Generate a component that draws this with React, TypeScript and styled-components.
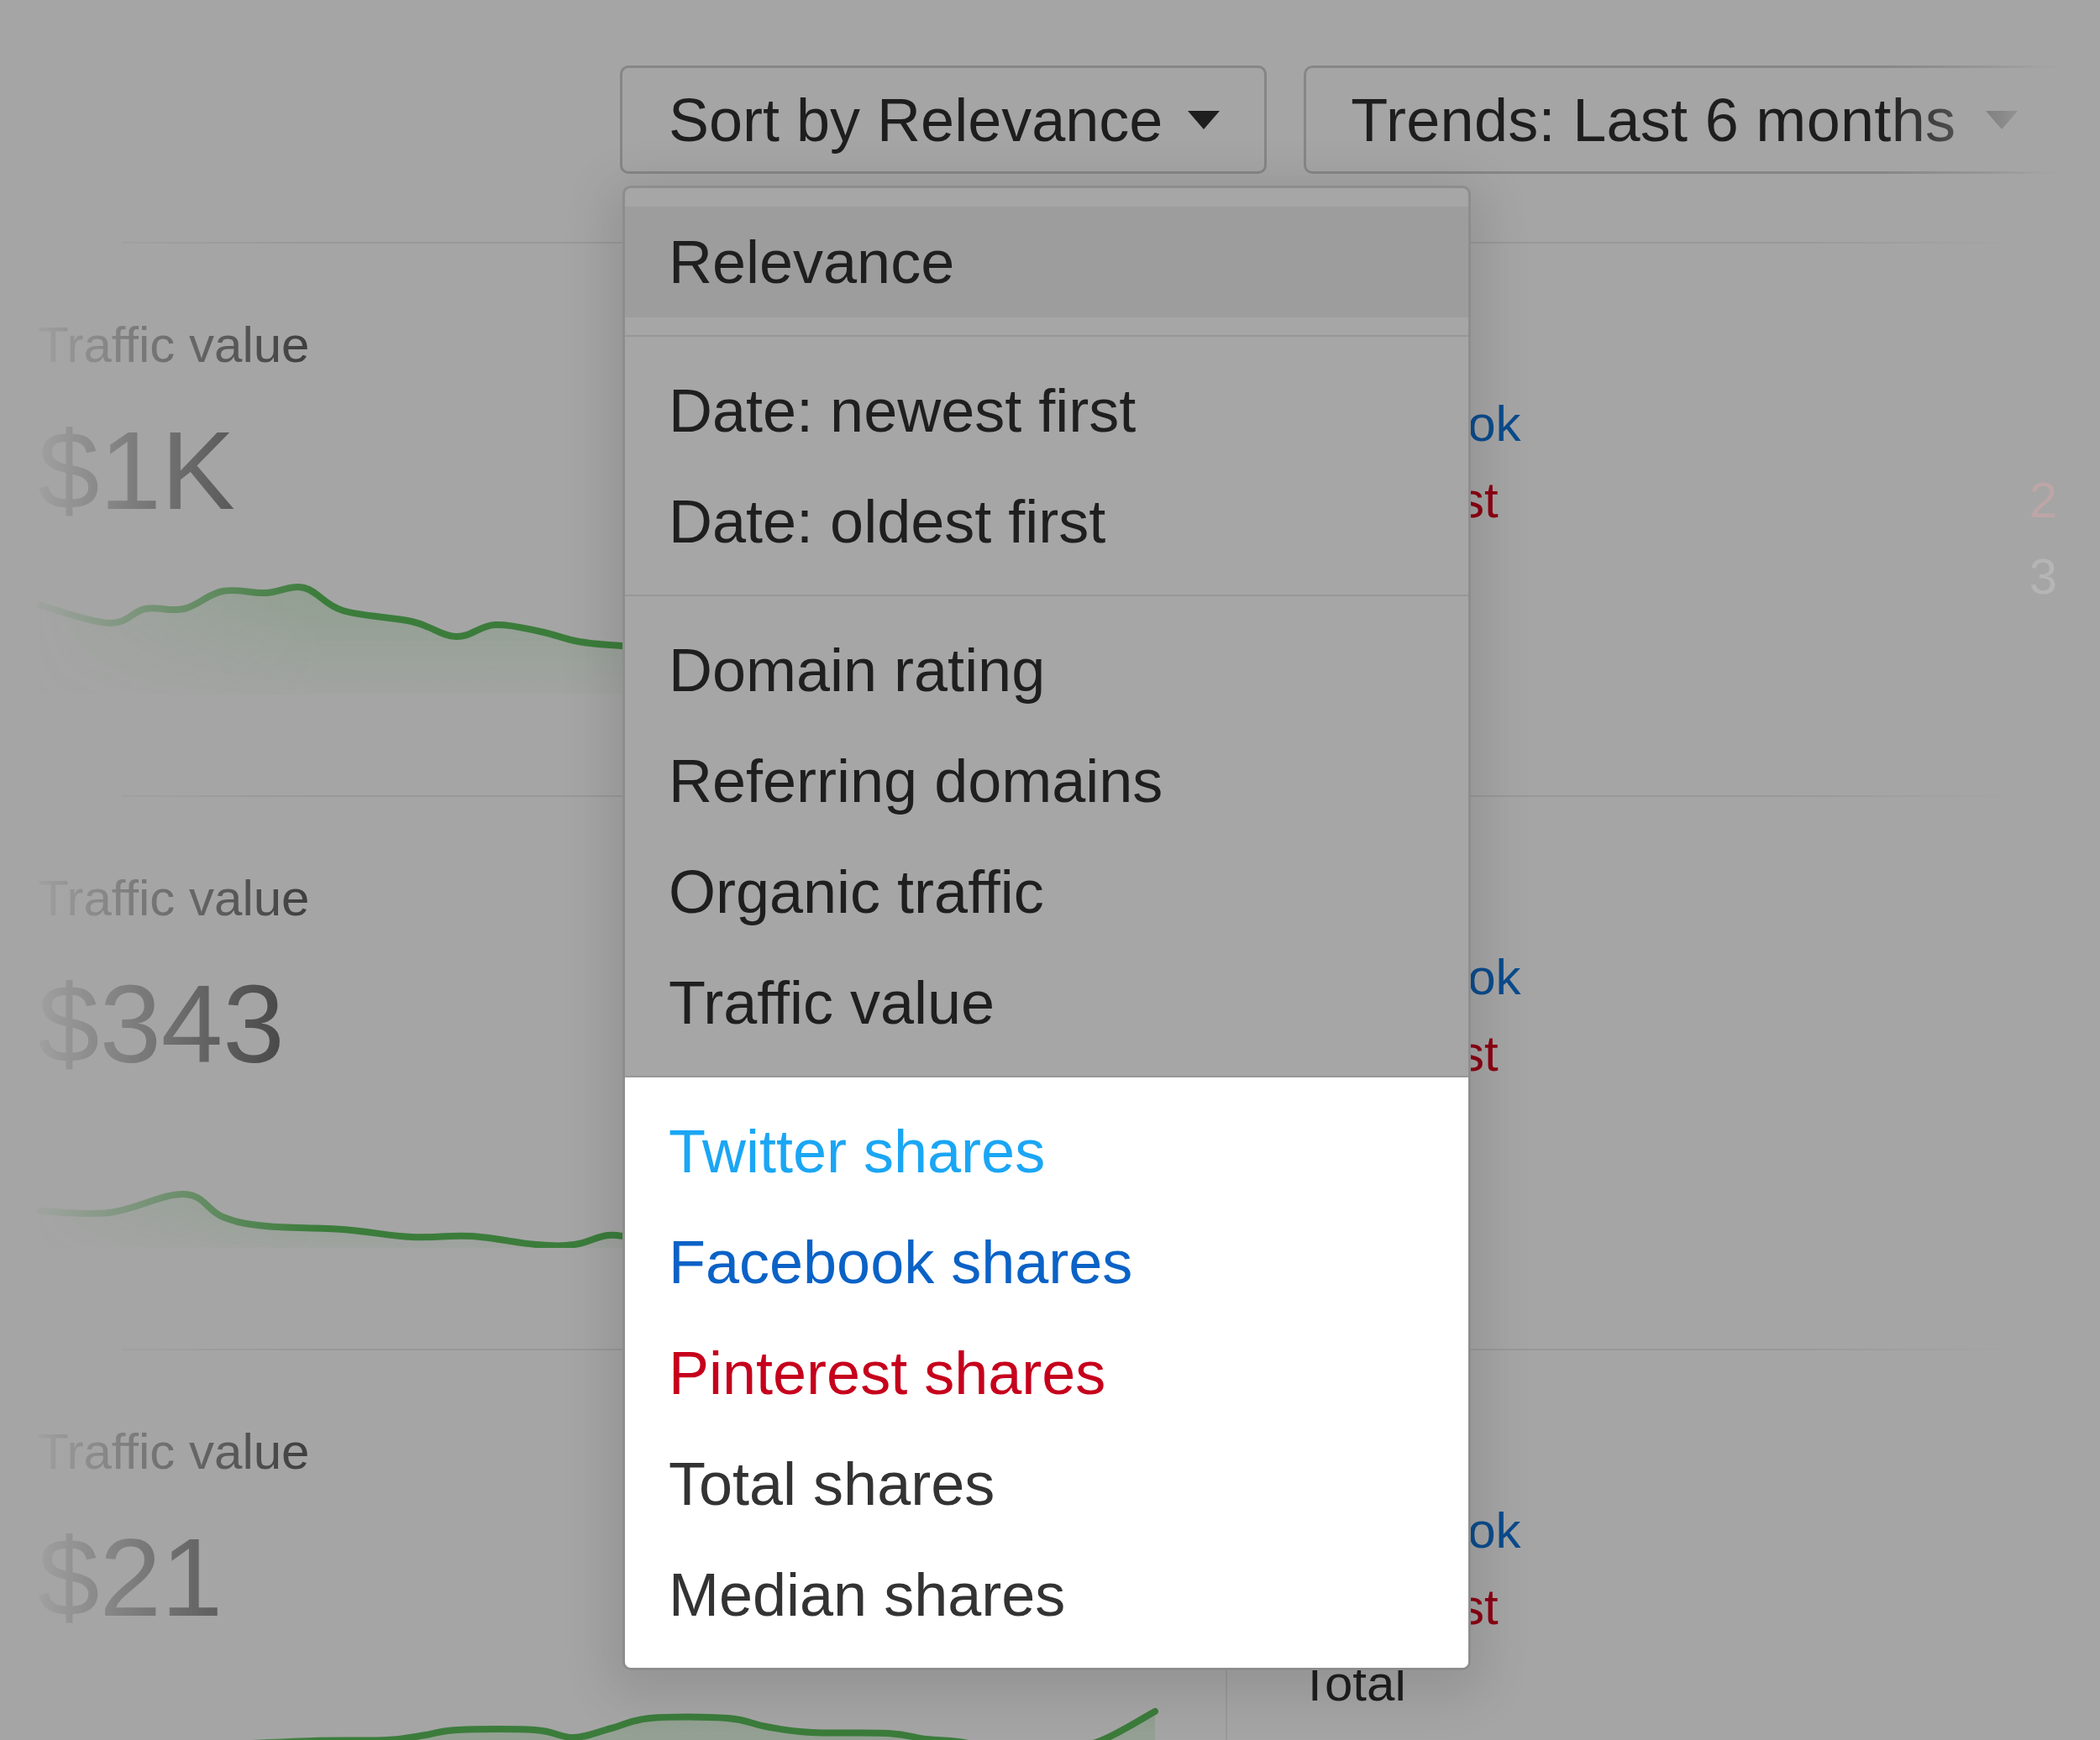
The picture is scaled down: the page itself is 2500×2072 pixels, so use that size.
import React from "react";
import styled, { createGlobalStyle } from "styled-components";

const GlobalStyle = createGlobalStyle`
  html, body {
    margin: 0;
    padding: 0;
    background: #a5a5a5;
  }
  body {
    font-family: "Liberation Sans", Arial, Helvetica, sans-serif;
    overflow: hidden;
  }
  * { box-sizing: border-box; }
`;

const Page = styled.div`
  position: relative;
  width: 2500px;
  height: 2072px;
  overflow: hidden;
  background: #a5a5a5;
`;

const Toolbar = styled.div`
  position: relative;
  z-index: 3;
  display: flex;
  gap: 44px;
  padding: 78px 0 0 738px;
`;

const SelectWrap = styled.div`
  position: relative;
`;

const SelectButton = styled.button<{ $fade?: boolean }>`
  display: flex;
  align-items: center;
  gap: ${(p) => (p.$fade ? "36px" : "30px")};
  height: 129px;
  padding: ${(p) => (p.$fade ? "0 55px 0 53px" : "0 53px 0 55px")};
  border: 3px solid #868686;
  border-radius: 10px;
  background: transparent;
  font-family: inherit;
  font-size: 72px;
  line-height: 1;
  color: #1e1e1e;
  white-space: nowrap;
  cursor: pointer;
  ${(p) =>
    p.$fade
      ? `
    letter-spacing: 0.3px;
    -webkit-mask-image: linear-gradient(to right, #000 0, #000 76%, rgba(0,0,0,0.45) 90%, rgba(0,0,0,0.05) 97%, transparent 100%);
    mask-image: linear-gradient(to right, #000 0, #000 76%, rgba(0,0,0,0.45) 90%, rgba(0,0,0,0.05) 97%, transparent 100%);
  `
      : ""}
`;

const Caret = styled.svg`
  display: block;
  flex: none;
`;

const Menu = styled.div`
  position: absolute;
  top: calc(100% + 14px);
  left: 3px;
  width: 1010px;
  border: 3px solid #8d8d8d;
  border-radius: 10px;
  background: #a6a6a6;
  overflow: hidden;
  box-shadow: 0 14px 60px 16px rgba(0, 0, 0, 0.11);
  z-index: 5;
`;

const MenuGroup = styled.div<{ $light?: boolean; $first?: boolean }>`
  padding: 22px 0 21px;
  border-top: ${(p) => (p.$first ? "none" : "2px solid #979797")};
  background: ${(p) => (p.$light ? "#ffffff" : "transparent")};
`;

const MenuItem = styled.div<{ $color?: string; $active?: boolean }>`
  height: 132px;
  line-height: 132px;
  padding-left: 52px;
  font-size: 72px;
  color: ${(p) => p.$color || "#1f1f1f"};
  background: ${(p) => (p.$active ? "#9d9d9d" : "transparent")};
  white-space: nowrap;
`;

const Cards = styled.div`
  margin-top: 81px;
  -webkit-mask-image: linear-gradient(to right, transparent 30px, rgba(0,0,0,0.5) 200px, #000 380px);
  mask-image: linear-gradient(to right, transparent 30px, rgba(0,0,0,0.5) 200px, #000 380px);
`;

const Card = styled.section`
  display: grid;
  grid-template-columns: 1459px 1fr;
  grid-template-rows: 2px 1fr;
  height: 659px;
`;

const Divider = styled.div`
  grid-column: 1 / -1;
  height: 2px;
  margin-left: 145px;
  width: 2245px;
  background: linear-gradient(to right, #989898 0, #989898 88%, rgba(152, 152, 152, 0) 100%);
`;

const LeftCol = styled.div`
  display: flex;
  flex-direction: column;
`;

const MetricLabel = styled.div`
  margin-top: 91px;
  padding-left: 45px;
  font-size: 60px;
  line-height: 60px;
  color: #3a3a3a;
`;

const MetricValue = styled.div`
  margin-top: 54px;
  padding-left: 45px;
  font-size: 132px;
  line-height: 132px;
  color: #3c3c3c;
`;

const Spark = styled.svg`
  display: block;
  flex: none;
`;

const RightCol = styled.div`
  margin: 38px 0 40px;
  padding: 40px 51px 0 86px;
  border-left: 2px solid #9a9a9a;
`;

const ShareRow = styled.div`
  display: flex;
  justify-content: space-between;
  height: 91px;
  line-height: 91px;
  font-size: 60px;
  white-space: nowrap;
`;

const ShareLabel = styled.span<{ $color: string }>`
  color: ${(p) => p.$color};
`;

const ShareCount = styled.span<{ $color: string }>`
  color: ${(p) => p.$color};
`;

type Pt = [number, number];

function smoothPath(pts: Pt[]): string {
  let d = `M ${pts[0][0]} ${pts[0][1]}`;
  for (let i = 0; i < pts.length - 1; i++) {
    const p0 = pts[i - 1] || pts[i];
    const p1 = pts[i];
    const p2 = pts[i + 1];
    const p3 = pts[i + 2] || p2;
    const t = 0.18;
    const c1x = p1[0] + (p2[0] - p0[0]) * t;
    const c1y = p1[1] + (p2[1] - p0[1]) * t;
    const c2x = p2[0] - (p3[0] - p1[0]) * t;
    const c2y = p2[1] - (p3[1] - p1[1]) * t;
    d += ` C ${c1x.toFixed(1)} ${c1y.toFixed(1)}, ${c2x.toFixed(1)} ${c2y.toFixed(1)}, ${p2[0]} ${p2[1]}`;
  }
  return d;
}

type Share = { label: string; color: string; count?: string; countColor?: string };

type CardData = {
  label: string;
  value: string;
  line: Pt[];
  shares: Share[];
};

const baseShares = (c?: { p?: string; t?: string }): Share[] => [
  { label: "Twitter", color: "#1a6f9f" },
  { label: "Facebook", color: "#0b4b8c" },
  { label: "Pinterest", color: "#8b0012", count: c?.p, countColor: "#bda5a8" },
  { label: "Total", color: "#1e1e1e", count: c?.t, countColor: "#b5b5b5" },
];

const cards: CardData[] = [
  {
    label: "Traffic value",
    value: "$1K",
    line: [
      [48, 433], [130, 454], [173, 437], [219, 437], [265, 416], [316, 418], [362, 412],
      [408, 439], [490, 452], [543, 470], [589, 456], [643, 464], [689, 476], [740, 481],
      [820, 486], [920, 479], [1020, 490], [1120, 484], [1220, 494], [1310, 489], [1375, 478],
    ],
    shares: baseShares({ p: "2", t: "3" }),
  },
  {
    label: "Traffic value",
    value: "$343",
    line: [
      [48, 495], [130, 497], [219, 475], [265, 502], [316, 513], [408, 517], [490, 526],
      [561, 525], [638, 535], [684, 535], [724, 524], [760, 527], [860, 532], [960, 528],
      [1060, 536], [1160, 531], [1260, 538], [1375, 526],
    ],
    shares: baseShares(),
  },
  {
    label: "Traffic value",
    value: "$21",
    line: [
      [48, 478], [250, 472], [373, 467], [461, 466], [507, 460], [545, 454], [637, 454],
      [683, 463], [728, 452], [774, 440], [866, 440], [912, 450], [966, 457], [1057, 458],
      [1103, 465], [1141, 468], [1200, 478], [1260, 476], [1310, 467], [1375, 432],
    ],
    shares: baseShares(),
  },
];

function Sparkline({ pts, id }: { pts: Pt[]; id: string }) {
  const line = smoothPath(pts);
  const last = pts[pts.length - 1];
  const area = `${line} L ${last[0]} 560 L ${pts[0][0]} 560 Z`;
  return (
    <Spark width={1400} height={200} viewBox="0 339 1400 200">
      <defs>
        <linearGradient id={id} x1="0" y1="0" x2="0" y2="1">
          <stop offset="0" stopColor="#4f8f4f" stopOpacity="0.24" />
          <stop offset="1" stopColor="#4f8f4f" stopOpacity="0" />
        </linearGradient>
      </defs>
      <path d={area} fill={`url(#${id})`} />
      <path d={line} fill="none" stroke="#3b7c3b" strokeWidth={8} strokeLinecap="round" strokeLinejoin="round" />
    </Spark>
  );
}

const menuGroups: { items: { text: string; color?: string; active?: boolean }[]; light?: boolean }[] = [
  { items: [{ text: "Relevance", active: true }] },
  { items: [{ text: "Date: newest first" }, { text: "Date: oldest first" }] },
  {
    items: [
      { text: "Domain rating" },
      { text: "Referring domains" },
      { text: "Organic traffic" },
      { text: "Traffic value" },
    ],
  },
  {
    light: true,
    items: [
      { text: "Twitter shares", color: "#1ba6f4" },
      { text: "Facebook shares", color: "#0b62c6" },
      { text: "Pinterest shares", color: "#c6001c" },
      { text: "Total shares", color: "#333333" },
      { text: "Median shares", color: "#333333" },
    ],
  },
];

export default function App() {
  return (
    <Page>
      <GlobalStyle />
      <Toolbar>
        <SelectWrap>
          <SelectButton>
            Sort by Relevance
            <Caret width={38} height={22} viewBox="0 0 38 22">
              <polygon points="0,0 38,0 19,22" fill="#1e1e1e" />
            </Caret>
          </SelectButton>
          <Menu>
            {menuGroups.map((g, gi) => (
              <MenuGroup key={gi} $first={gi === 0} $light={g.light}>
                {g.items.map((it) => (
                  <MenuItem key={it.text} $color={it.color} $active={it.active}>
                    {it.text}
                  </MenuItem>
                ))}
              </MenuGroup>
            ))}
          </Menu>
        </SelectWrap>
        <SelectButton $fade>
          Trends: Last 6 months
          <Caret width={38} height={22} viewBox="0 0 38 22">
            <polygon points="0,0 38,0 19,22" fill="#5a5a5a" />
          </Caret>
        </SelectButton>
      </Toolbar>
      <Cards>
        {cards.map((c, i) => (
          <Card key={i}>
            <Divider />
            <LeftCol>
              <MetricLabel>{c.label}</MetricLabel>
              <MetricValue>{c.value}</MetricValue>
              <Sparkline pts={c.line} id={`spark-${i}`} />
            </LeftCol>
            <RightCol>
              {c.shares.map((s) => (
                <ShareRow key={s.label}>
                  <ShareLabel $color={s.color}>{s.label}</ShareLabel>
                  {s.count ? <ShareCount $color={s.countColor || "#b7b7b7"}>{s.count}</ShareCount> : null}
                </ShareRow>
              ))}
            </RightCol>
          </Card>
        ))}
      </Cards>
    </Page>
  );
}
